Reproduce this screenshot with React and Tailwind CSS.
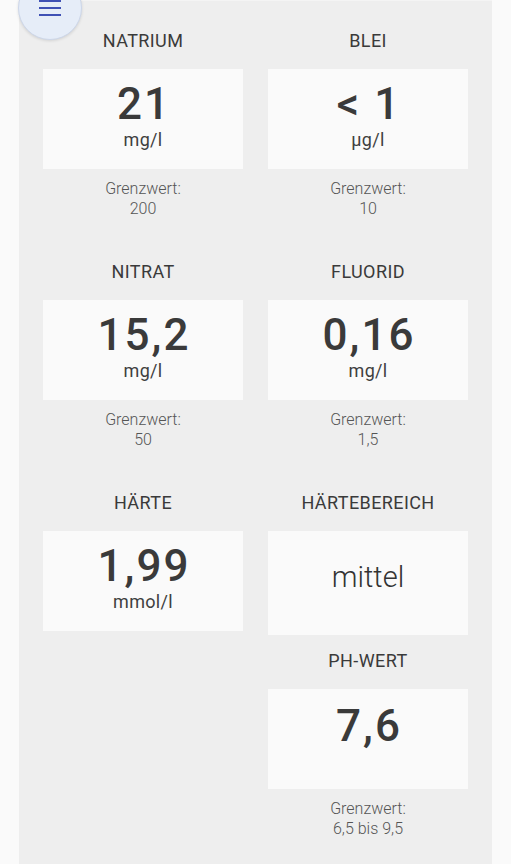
import React from "react";

const font = { fontFamily: "Roboto, 'Noto Sans', Arial, sans-serif" };

function Title({ children }) {
  return (
    <div className="text-center text-[18px] leading-[24px] font-normal text-[#3a3a3a] tracking-[0.4px]">
      {children}
    </div>
  );
}

function ValueCard({ value, unit }) {
  return (
    <div className="mt-[16px] h-[100px] bg-[#fafafa] flex flex-col items-center pt-[13px]">
      <div className="text-[44px] leading-[44px] font-medium text-[#3a3a3a] tracking-[2px] pl-[2px]">{value}</div>
      <div className="mt-[2px] text-[18px] leading-[24px] font-normal text-[#3f3f3f] tracking-[0.3px]">{unit}</div>
    </div>
  );
}

function Limit({ value }) {
  return (
    <div className="mt-[10px] text-center text-[16px] leading-[20px] font-light text-[#555555]">
      <div>Grenzwert:</div>
      <div>{value}</div>
    </div>
  );
}

function Cell({ title, value, unit, limit }) {
  return (
    <div>
      <Title>{title}</Title>
      <ValueCard value={value} unit={unit} />
      <Limit value={limit} />
    </div>
  );
}

export default function App() {
  return (
    <div className="min-h-[864px] bg-[#fafafa] relative overflow-hidden" style={font}>
      <div className="mx-auto w-[473px] min-h-[864px] bg-[#eeeeee] border-t border-[#f4f4f4] px-[24px] pt-[28px]">
        <div className="grid grid-cols-2 gap-x-[25px] gap-y-[41px]">
          <Cell title="NATRIUM" value="21" unit="mg/l" limit="200" />
          <Cell title="BLEI" value="< 1" unit="µg/l" limit="10" />
          <Cell title="NITRAT" value="15,2" unit="mg/l" limit="50" />
          <Cell title="FLUORID" value="0,16" unit="mg/l" limit="1,5" />
          <div>
            <Title>HÄRTE</Title>
            <ValueCard value="1,99" unit="mmol/l" />
          </div>
          <div>
            <Title>HÄRTEBEREICH</Title>
            <div className="mt-[16px] h-[104px] bg-[#fafafa] flex justify-center pt-[31px]">
              <div className="text-[29px] leading-[30px] font-light text-[#333333]">mittel</div>
            </div>
            <div className="mt-[14px]">
              <Title>PH-WERT</Title>
              <div className="mt-[16px] h-[100px] bg-[#fafafa] flex flex-col items-center pt-[15px]">
                <div className="text-[44px] leading-[44px] font-medium text-[#3a3a3a] tracking-[2px] pl-[2px]">7,6</div>
              </div>
              <Limit value="6,5 bis 9,5" />
            </div>
          </div>
        </div>
      </div>
      <button
        aria-label="Menü"
        className="absolute left-[18px] top-[-24px] w-[64px] h-[64px] rounded-full bg-[#e6edf8] border border-[#cdd7ea] shadow-[0_1px_3px_rgba(0,0,0,0.12)] flex flex-col items-center justify-end pb-[23px] gap-[5px]"
      >
        <span className="block w-[22px] h-[2px] bg-[#3f51b5]"></span>
        <span className="block w-[22px] h-[2px] bg-[#3f51b5]"></span>
        <span className="block w-[22px] h-[2px] bg-[#3f51b5]"></span>
      </button>
    </div>
  );
}
